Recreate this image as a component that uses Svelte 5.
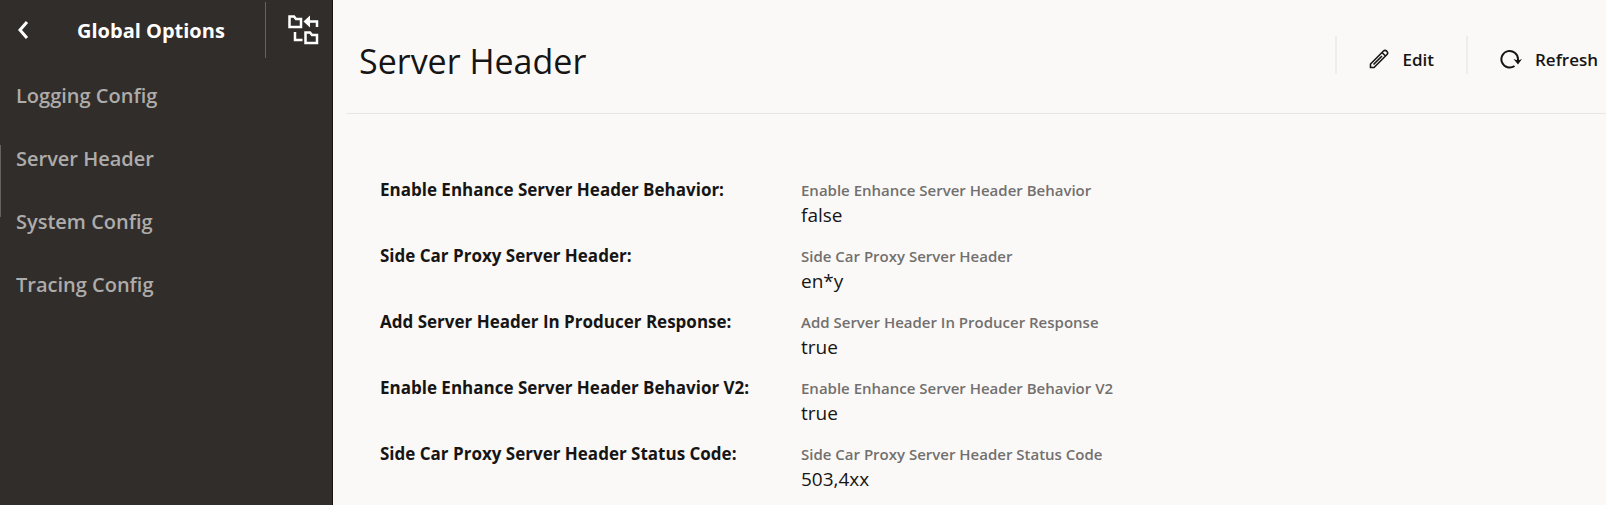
<script lang="ts">
	interface Field {
		label: string;
		value: string;
	}

	const navItems = ['Logging Config', 'Server Header', 'System Config', 'Tracing Config'];

	const fields: Field[] = [
		{ label: 'Enable Enhance Server Header Behavior', value: 'false' },
		{ label: 'Side Car Proxy Server Header', value: 'en*y' },
		{ label: 'Add Server Header In Producer Response', value: 'true' },
		{ label: 'Enable Enhance Server Header Behavior V2', value: 'true' },
		{ label: 'Side Car Proxy Server Header Status Code', value: '503,4xx' }
	];

	let selected = $state('Server Header');
</script>

<div class="layout">
	<aside class="sidebar">
		<div class="sidebar-header">
			<button class="back-btn" type="button" aria-label="Back">
				<svg width="12" height="20" viewBox="0 0 12 20" fill="none" aria-hidden="true">
					<path d="M10 2L3 10L10 18" stroke="currentColor" stroke-width="3" />
				</svg>
			</button>
			<span class="sidebar-title">Global Options</span>
			<button class="tree-btn" type="button" aria-label="Switch tree">
				<svg width="32" height="30" viewBox="0 0 32 30" fill="none" aria-hidden="true">
					<g stroke="currentColor" stroke-width="2.5">
						<path d="M1.5 1.5H6L8 4H13V12H1.5Z" />
						<path d="M17.5 17.5H22L24 20H29V28H17.5Z" />
						<path d="M20 6.5H29V12" />
						<path d="M7 17V25H14.5" />
					</g>
					<path d="M15.5 6.5L22 0.5V12.5Z" fill="currentColor" />
				</svg>
			</button>
		</div>
		<nav>
			{#each navItems as item}
				<a href="#{item.toLowerCase().replace(' ', '-')}" class:selected={item === selected} onclick={() => (selected = item)}>
					{item}
				</a>
			{/each}
		</nav>
	</aside>

	<main>
		<header>
			<h1>{selected}</h1>
			<div class="toolbar">
				<button class="tool-btn" type="button">
					<svg width="20" height="20" viewBox="0 0 20 20" fill="none" aria-hidden="true">
						<path
							d="M1.5 18.5V15L14.5 2Q16 0.5 17.8 2.2Q19.5 4 18 5.5L5 18.5ZM13 3.5L16.5 7M4.5 15.5L13 7"
							stroke="currentColor"
							stroke-width="1.6"
						/>
					</svg>
					Edit
				</button>
				<button class="tool-btn" type="button">
					<svg width="22" height="20" viewBox="0 0 22 20" fill="none" aria-hidden="true">
						<path d="M14.5 17A8.3 8.3 0 1 1 18 10V12" stroke="currentColor" stroke-width="2" />
						<path d="M13.5 10L18 11.5L22 10L18 15.5Z" fill="currentColor" />
					</svg>
					Refresh
				</button>
			</div>
		</header>

		<dl>
			{#each fields as field}
				<div class="field">
					<dt>{field.label}:</dt>
					<dd>
						<span class="hint">{field.label}</span>
						<span class="value">{field.value}</span>
					</dd>
				</div>
			{/each}
		</dl>
	</main>
</div>

<style>
	:global(body) {
		margin: 0;
		background: #fbf9f8;
	}

	.layout {
		display: flex;
		min-height: 100vh;
		font-family: 'Segoe UI', 'Open Sans', 'Noto Sans', sans-serif;
		color: #161513;
	}

	button {
		padding: 0;
		border: none;
		background: none;
		color: inherit;
		font: inherit;
		cursor: pointer;
	}

	svg {
		display: block;
		flex: none;
	}

	/* Sidebar */
	.sidebar {
		flex: none;
		box-sizing: border-box;
		width: 333px;
		border-right: 1px solid #161513;
		background: #312d2a;
		color: #fff;
	}

	.sidebar-header {
		display: flex;
		align-items: center;
		height: 60px;
		padding-bottom: 4px;
	}

	.back-btn {
		padding: 0 16px 0 17px;
	}

	.sidebar-title {
		flex: 1;
		padding: 2px 0 0 32px;
		font-size: 20px;
		font-weight: 700;
		line-height: 28px;
		white-space: nowrap;
	}

	.tree-btn {
		display: flex;
		align-items: center;
		height: 56px;
		padding: 0 12px 0 22px;
		border-left: 1px solid #65625f;
	}

	nav {
		display: flex;
		flex-direction: column;
	}

	nav a {
		position: relative;
		height: 63px;
		padding-left: 16px;
		color: #aeacaa;
		font-size: 20px;
		font-weight: 600;
		line-height: 63px;
		text-decoration: none;
	}

	/* Marker runs past the bottom of the selected row */
	nav a.selected::before {
		content: '';
		position: absolute;
		top: 18px;
		left: 0;
		width: 1px;
		height: 72px;
		background: #65625f;
	}

	/* Content */
	main {
		flex: 1;
		min-width: 0;
		padding-left: 13px;
	}

	header {
		display: flex;
		align-items: center;
		justify-content: space-between;
		height: 113px;
		padding-left: 13px;
		border-bottom: 1px solid #e8e6e4;
	}

	h1 {
		margin: 8px 0 0;
		font-size: 34px;
		font-weight: 400;
		line-height: 48px;
	}

	.toolbar {
		display: flex;
		padding-bottom: 3px;
	}

	.tool-btn {
		display: flex;
		align-items: center;
		gap: 13px;
		box-sizing: border-box;
		height: 38px;
		padding: 8px 32px 0;
		border-left: 2px solid #efedeb;
		font-size: 17px;
		font-weight: 600;
	}

	.tool-btn:last-child {
		padding-right: 8px;
	}

	dl {
		display: flex;
		flex-direction: column;
		margin: 0;
		padding: 63px 0 0 34px;
	}

	.field {
		display: grid;
		grid-template-columns: 421px 1fr;
		min-height: 66px;
	}

	dt {
		font-size: 17px;
		font-weight: 700;
		line-height: 26px;
	}

	dd {
		display: flex;
		flex-direction: column;
		margin: 0;
	}

	.hint {
		color: #72706e;
		font-size: 15px;
		font-weight: 600;
		line-height: 26px;
	}

	.value {
		font-size: 19px;
		line-height: 24px;
	}
</style>
